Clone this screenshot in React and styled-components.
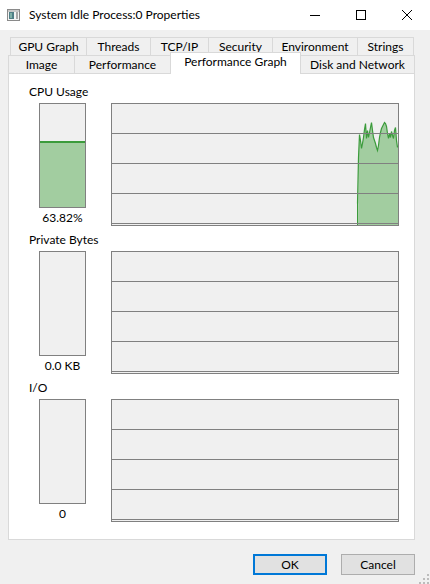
import React from 'react';
import styled, { createGlobalStyle } from 'styled-components';

const GlobalStyle = createGlobalStyle`
  html, body {
    margin: 0;
    padding: 0;
    background: #f0f0f0;
  }
  body {
    font-family: Lato, "Noto Sans", "Segoe UI", sans-serif;
    font-size: 12px;
    color: #000;
  }
`;

const Window = styled.div`
  position: relative;
  width: 430px;
  height: 584px;
  display: flex;
  flex-direction: column;
  background: #f0f0f0;
  overflow: hidden;
`;

const TitleBar = styled.div`
  height: 30px;
  flex: none;
  background: #fff;
  display: flex;
  align-items: center;
`;

const AppIcon = styled.svg`
  flex: none;
  margin: 0 9px 0 7px;
  display: block;
`;

const Title = styled.div`
  flex: 1;
  line-height: 16px;
  white-space: nowrap;
`;

const CaptionButton = styled.div`
  width: 46px;
  height: 30px;
  display: flex;
  align-items: center;
  justify-content: center;
`;

const Tabs = styled.div`
  margin-top: 7px;
  display: flex;
  flex-direction: column;
`;

const TabRow = styled.div`
  display: flex;
  align-items: flex-end;
  height: 18px;
  padding-left: ${p => (p.$inset ? 10 : 8)}px;
`;

const Tab = styled.div`
  flex: none;
  box-sizing: border-box;
  width: ${p => p.$w}px;
  height: ${p => (p.$active ? 22 : 18)}px;
  margin-right: -1px;
  margin-bottom: ${p => (p.$active ? -1 : 0)}px;
  border: 1px solid #d9d9d9;
  border-bottom: none;
  background: ${p => (p.$active ? '#fff' : '#f0f0f0')};
  z-index: ${p => (p.$active ? 2 : 1)};
  display: flex;
  align-items: center;
  justify-content: center;
  padding-bottom: ${p => (p.$active ? 3 : 0)}px;
  line-height: 14px;
  white-space: nowrap;
`;

const Panel = styled.div`
  box-sizing: border-box;
  width: 407px;
  height: 467px;
  margin-left: 8px;
  background: #fff;
  border: 1px solid #d9d9d9;
  padding: 10px 0 0 20px;
  display: flex;
  flex-direction: column;
`;

const Section = styled.div`
  height: ${p => p.$h}px;
  flex: none;
  display: flex;
  flex-direction: column;
`;

const Label = styled.div`
  line-height: 16px;
  height: 16px;
  margin-bottom: 3px;
`;

const MeterRow = styled.div`
  display: flex;
  align-items: flex-start;
  padding-left: 10px;
`;

const BarColumn = styled.div`
  width: 47px;
  display: flex;
  flex-direction: column;
  align-items: center;
`;

const Bar = styled.div`
  box-sizing: border-box;
  width: 47px;
  height: 105px;
  border: 1px solid #808080;
  background: #f0f0f0;
  display: flex;
  flex-direction: column;
  justify-content: flex-end;
`;

const BarFill = styled.div`
  box-sizing: border-box;
  border-top: 2px solid #3b9b3b;
  background: #a2cda0;
`;

const BarValue = styled.div`
  margin-top: 2px;
  line-height: 16px;
`;

const Graph = styled.div`
  box-sizing: border-box;
  width: 288px;
  height: 123px;
  margin-left: 25px;
  border: 1px solid #808080;
  background: #f0f0f0;
`;

const Buttons = styled.div`
  display: flex;
  justify-content: flex-end;
  gap: 14px;
  padding-right: 15px;
  margin-top: 14px;
`;

const Button = styled.div`
  box-sizing: border-box;
  width: 74px;
  height: 21px;
  background: #e1e1e1;
  border: ${p => (p.$default ? '2px solid #0078d7' : '1px solid #adadad')};
  display: flex;
  align-items: center;
  justify-content: center;
  line-height: 14px;
`;

const Grip = styled.svg`
  position: absolute;
  right: 1px;
  bottom: 0;
  display: block;
`;

const cpuSeries = [
  [245, 99], [246, 53], [247, 30], [248, 36], [249, 44], [250, 39], [251, 33],
  [252, 25], [253, 19], [254, 34], [255, 26], [256, 33], [257, 28], [258, 23],
  [259, 18], [260, 26], [261, 33], [262, 36], [263, 39], [264, 43], [265, 46],
  [266, 41], [267, 33], [268, 28], [269, 24], [270, 22], [271, 20], [272, 18],
  [273, 19], [274, 22], [275, 29], [276, 34], [277, 29], [278, 33], [279, 27],
  [280, 31], [281, 34], [282, 26], [283, 23], [284, 36], [285, 43],
];

function GraphChart({ series }) {
  const w = 286;
  const h = 121;
  const pts = series ? series.map(([x, y]) => `${x + 0.5},${y + 0.5}`).join(' ') : '';
  return (
    <Graph>
      <svg width={w} height={h} style={{ display: 'block' }}>
        {series && (
          <>
            <polygon
              points={`${series[0][0] + 1},${h} ${series
                .slice(1)
                .map(([x, y]) => `${x + 0.5},${y + 0.5}`)
                .join(' ')} ${w},${series[series.length - 1][1]} ${w},${h}`}
              fill="#a2cda0"
            />
            <polyline points={pts} fill="none" stroke="#3b9b3b" strokeWidth="1.2" />
            <line x1={series[0][0] + 0.5} y1={series[0][1]} x2={series[0][0] + 0.5} y2={h} stroke="#3b9b3b" />
          </>
        )}
        {[29, 59, 89, 119].map(y => (
          <line key={y} x1="0" x2={w} y1={y + 0.5} y2={y + 0.5} stroke="#808080" strokeWidth="1" />
        ))}
      </svg>
    </Graph>
  );
}

function Meter({ label, value, level, series, h }) {
  const inner = 103;
  return (
    <Section $h={h}>
      <Label>{label}</Label>
      <MeterRow>
        <BarColumn>
          <Bar>
            {level > 0 && <BarFill style={{ height: Math.round(level * inner) }} />}
          </Bar>
          <BarValue>{value}</BarValue>
        </BarColumn>
        <GraphChart series={series} />
      </MeterRow>
    </Section>
  );
}

const topTabs = [
  ['GPU Graph', 77],
  ['Threads', 65],
  ['TCP/IP', 59],
  ['Security', 65],
  ['Environment', 86],
  ['Strings', 57],
];

const bottomTabs = [
  ['Image', 67],
  ['Performance', 97],
  ['Performance Graph', 131, true],
  ['Disk and Network', 115],
];

export default function App() {
  return (
    <>
      <GlobalStyle />
      <Window>
        <TitleBar>
          <AppIcon width="13" height="12" viewBox="0 0 13 12">
            <rect x="0.5" y="0.5" width="12" height="11" fill="#f4f4f4" stroke="#8a8a8a" />
            <rect x="1" y="1" width="11" height="2" fill="#c8c8c8" />
            <rect x="2" y="3" width="5" height="7" fill="#4f7f86" />
            <rect x="3" y="4" width="2" height="5" fill="#7fb0a8" />
            <rect x="9" y="3" width="2" height="7" fill="#a8a8a8" />
          </AppIcon>
          <Title>System Idle Process:0 Properties</Title>
          <CaptionButton>
            <svg width="10" height="10" viewBox="0 0 10 10">
              <line x1="0" y1="5.5" x2="10" y2="5.5" stroke="#000" />
            </svg>
          </CaptionButton>
          <CaptionButton>
            <svg width="10" height="10" viewBox="0 0 10 10">
              <rect x="0.5" y="0.5" width="9" height="9" fill="none" stroke="#000" />
            </svg>
          </CaptionButton>
          <CaptionButton>
            <svg width="10" height="10" viewBox="0 0 10 10">
              <path d="M0 0L10 10M10 0L0 10" stroke="#000" strokeWidth="1" />
            </svg>
          </CaptionButton>
        </TitleBar>

        <Tabs>
          <TabRow $inset>
            {topTabs.map(([name, w]) => (
              <Tab key={name} $w={w}>{name}</Tab>
            ))}
          </TabRow>
          <TabRow>
            {bottomTabs.map(([name, w, active]) => (
              <Tab key={name} $w={w} $active={active}>{name}</Tab>
            ))}
          </TabRow>
        </Tabs>

        <Panel>
          <Meter label="CPU Usage" value="63.82%" level={0.6382} series={cpuSeries} h={148} />
          <Meter label="Private Bytes" value="0.0 KB" level={0} h={148} />
          <Meter label="I/O" value="0" level={0} h={147} />
        </Panel>

        <Buttons>
          <Button $default>OK</Button>
          <Button>Cancel</Button>
        </Buttons>

        <Grip width="10" height="10" viewBox="0 0 10 10">
          {[[8, 0], [4, 4], [8, 4], [0, 8], [4, 8], [8, 8]].map(([x, y]) => (
            <rect key={`${x}-${y}`} x={x} y={y} width="2" height="2" fill="#bcbcbc" />
          ))}
        </Grip>
      </Window>
    </>
  );
}
